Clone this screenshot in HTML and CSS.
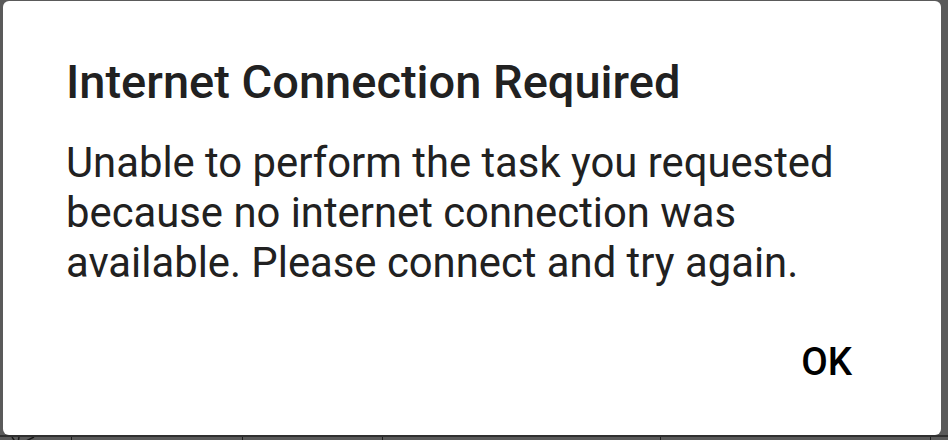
FILE: index.html
```html
<!DOCTYPE html>
<html lang="en">
<head>
<meta charset="utf-8">
<title>Internet Connection Required</title>
<link rel="stylesheet" href="styles.css">
</head>
<body>
<div class="screen">
  <div class="dialog">
    <h1 class="title">Internet Connection Required</h1>
    <p class="message">Unable to perform the task you requested because no internet connection was available. Please connect and try again.</p>
    <div class="actions">
      <button class="btn">OK</button>
    </div>
  </div>
  <div class="under">
    <div class="cell c1">
      <svg class="mark" width="40" height="6" viewBox="0 0 40 6"><path d="M12 0 L16 6 M19 0 L18 6 M34 0 L24 5" stroke="#1a1a1a" stroke-width="1.5" fill="none"/></svg>
    </div>
    <div class="cell c2"></div>
    <div class="cell c3"></div>
    <div class="cell c4"></div>
    <div class="cell c5"></div>
    <div class="cell c6"></div>
  </div>
</div>
</body>
</html>
```
FILE: styles.css
```css
html, body {
  margin: 0;
  padding: 0;
  width: 948px;
  height: 440px;
  overflow: hidden;
  background: #5a5a5a;
}
.screen {
  display: flex;
  flex-direction: column;
  height: 440px;
  padding: 1px 7px 0 3px;
  box-sizing: border-box;
  font-family: Roboto, "Noto Sans", sans-serif;
}
.dialog {
  height: 434px;
  flex: none;
  background: #ffffff;
  border-radius: 6px;
  box-sizing: border-box;
  padding: 53px 40px 0 63px;
  display: flex;
  flex-direction: column;
}
.title {
  margin: 0;
  font-size: 47px;
  font-weight: 500;
  line-height: 56px;
  color: #212121;
  white-space: nowrap;
}
.message {
  margin: 28px 0 0 0;
  font-size: 41.8px;
  font-weight: 400;
  line-height: 50px;
  color: #212121;
  width: 800px;
}
.actions {
  display: flex;
  justify-content: flex-end;
  margin-top: 52px;
}
.btn {
  background: none;
  border: none;
  padding: 0;
  margin-right: 49px;
  font-family: Roboto, "Noto Sans", sans-serif;
  font-size: 38.5px;
  font-weight: 500;
  color: #000000;
  line-height: 44px;
}
.under {
  flex: none;
  display: flex;
  height: 5px;
  margin-left: -3px;
  margin-right: -7px;
  border-top: 2px solid #2f2f2f;
}
.cell {
  border-left: 1px solid #1e1e1e;
  height: 100%;
  overflow: hidden;
}
.mark {
  display: block;
}
.c1 { width: 71px; border-left: none; }
.c2 { width: 170px; }
.c3 { width: 139px; }
.c4 { width: 277px; }
.c5 { width: 269px; }
.c6 { flex: 1; }
```
